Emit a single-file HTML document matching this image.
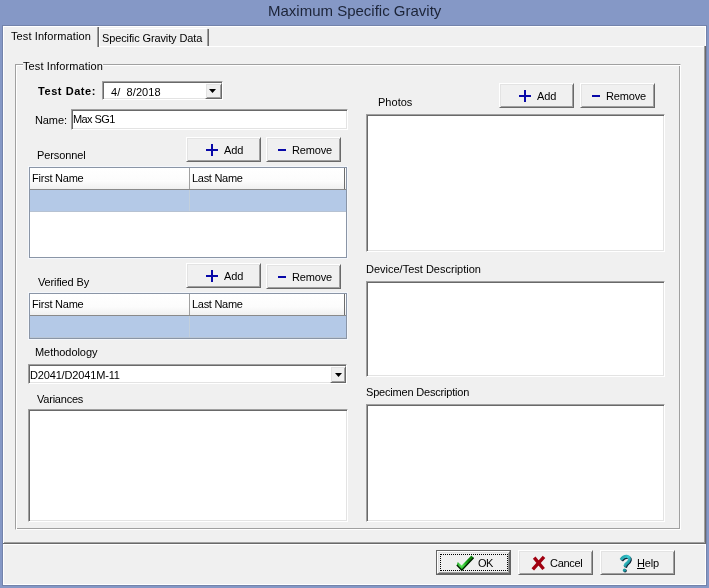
<!DOCTYPE html>
<html><head><meta charset="utf-8">
<style>
*{margin:0;padding:0;box-sizing:border-box}
html,body{width:709px;height:588px;overflow:hidden}
body{background:#8598c6;position:relative;font-family:"Liberation Sans",sans-serif;font-size:11px;color:#000}
.a{position:absolute}
.t{position:absolute;white-space:pre;line-height:13px;letter-spacing:-0.1px;will-change:transform}
.ln{position:absolute}
.sunk{position:absolute;background:#fff;border:1px solid;border-color:#a0a0a0 #fff #fff #a0a0a0;box-shadow:inset 1px 1px 0 #696969,inset -1px -1px 0 #e3e3e3}
.btn{position:absolute;background:#f0f0f0;border:1px solid;border-color:#fff #696969 #696969 #fff;box-shadow:inset 1px 1px 0 #e3e3e3,inset -1px -1px 0 #a0a0a0}
.grid{position:absolute;background:#fff;border:1px solid #8a95a6;box-shadow:0 0 0 1px #f4f7fc}
.hdr{position:absolute;left:0;top:0;height:22px;background:linear-gradient(#ffffff,#fcfcfc 60%,#f0f0f0);border-bottom:1px solid #8a8a8a}
.sel{position:absolute;left:0;background:#b4c9e7}
.grp{position:absolute;border:1px solid;border-color:#a0a0a0 #fff #fff #a0a0a0;box-shadow:inset 1px 1px 0 #fff,inset -1px -1px 0 #a0a0a0}
</style></head><body>
<!-- frame dark lines -->
<div class="a" style="left:2px;top:25px;width:705px;height:561px;background:#7383ab"></div>
<!-- client -->
<div class="a" style="left:3px;top:26px;width:703px;height:559px;background:#f0f0f0"></div>
<!-- title -->
<div class="t" style="left:268px;top:2px;font-size:15px;line-height:17px;color:#1c2438;letter-spacing:0">Maximum Specific Gravity</div>

<!-- tab strip white top/left/right -->
<div class="ln" style="left:3px;top:26px;width:703px;height:1px;background:#fff"></div>
<div class="ln" style="left:3px;top:26px;width:1px;height:518px;background:#fff"></div>
<div class="ln" style="left:705px;top:26px;width:1px;height:20px;background:#fff"></div>
<!-- tab1 right edge -->
<div class="ln" style="left:97px;top:27px;width:1px;height:20px;background:#a0a0a0"></div>
<div class="ln" style="left:98px;top:27px;width:1px;height:20px;background:#696969"></div>
<!-- tab2 -->
<div class="ln" style="left:99px;top:28px;width:108px;height:1px;background:#fff"></div>
<div class="ln" style="left:99px;top:28px;width:1px;height:18px;background:#fff"></div>
<div class="ln" style="left:207px;top:29px;width:1px;height:17px;background:#a0a0a0"></div>
<div class="ln" style="left:208px;top:29px;width:1px;height:17px;background:#696969"></div>
<div class="t" style="left:11px;top:30px;letter-spacing:0.1px">Test Information</div>
<div class="t" style="left:102px;top:32px;letter-spacing:-0.12px">Specific Gravity Data</div>
<!-- page border -->
<div class="ln" style="left:99px;top:46px;width:607px;height:1px;background:#fff"></div>
<div class="ln" style="left:704px;top:46px;width:1px;height:497px;background:#a0a0a0"></div>
<div class="ln" style="left:705px;top:46px;width:1px;height:498px;background:#696969"></div>
<div class="ln" style="left:4px;top:542px;width:701px;height:1px;background:#a0a0a0"></div>
<div class="ln" style="left:3px;top:543px;width:703px;height:1px;background:#696969"></div>
<!-- bottom panel -->
<div class="a" style="left:3px;top:544px;width:703px;height:41px;border:1px solid #fff"></div>

<!-- group box -->
<div class="grp" style="left:15px;top:64px;width:666px;height:466px"></div>
<div class="a" style="left:23px;top:60px;width:80px;height:12px;background:#f0f0f0"></div>
<div class="t" style="left:23px;top:60px;letter-spacing:0.1px">Test Information</div>

<!-- Test Date -->
<div class="t" style="left:38px;top:85px;font-weight:bold;letter-spacing:0.56px">Test Date:</div>
<div class="sunk" style="left:102px;top:81px;width:121px;height:19px"></div>
<div class="t" style="left:111px;top:86px;letter-spacing:0.07px">4/  8/2018</div>
<div class="btn" style="left:205px;top:83px;width:17px;height:16px"></div>
<svg class="a" style="left:209px;top:89px" width="7" height="4"><polygon points="0,0 7,0 3.5,4" fill="#000"/></svg>

<!-- Name -->
<div class="t" style="left:35px;top:114px;letter-spacing:-0.1px">Name:</div>
<div class="sunk" style="left:71px;top:109px;width:277px;height:21px"></div>
<div class="t" style="left:73px;top:113px;letter-spacing:-0.58px">Max SG1</div>

<!-- Personnel -->
<div class="t" style="left:37px;top:149px;letter-spacing:-0.11px">Personnel</div>
<div class="btn" style="left:186px;top:137px;width:75px;height:25px"></div>
<svg class="a" style="left:206px;top:144px" width="12" height="12"><rect x="5" y="0" width="2" height="12" fill="#0808a8"/><rect x="0" y="5" width="12" height="2" fill="#0808a8"/></svg>
<div class="t" style="left:224px;top:144px;letter-spacing:-0.15px">Add</div>
<div class="btn" style="left:266px;top:137px;width:75px;height:25px"></div>
<svg class="a" style="left:278px;top:149px" width="8" height="2"><rect x="0" y="0" width="8" height="2" fill="#0808a8"/></svg>
<div class="t" style="left:292px;top:144px;letter-spacing:-0.16px">Remove</div>

<div class="grid" style="left:29px;top:167px;width:318px;height:91px">
  <div class="hdr" style="width:316px"></div>
  <div class="ln" style="left:159px;top:0;width:1px;height:21px;background:#a0a0a0"></div>
  <div class="ln" style="left:314px;top:0;width:1px;height:21px;background:#6d6d6d"></div>
  <div class="sel" style="top:22px;width:316px;height:21px"></div>
  <div class="ln" style="left:0;top:43px;width:316px;height:1px;background:#b6c2d2"></div>
  <div class="ln" style="left:159px;top:22px;width:1px;height:21px;background:#c2cfdc"></div>
</div>
<div class="t" style="left:32px;top:172px;letter-spacing:-0.23px">First Name</div>
<div class="t" style="left:192px;top:172px;letter-spacing:-0.29px">Last Name</div>

<!-- Verified By -->
<div class="t" style="left:38px;top:276px;letter-spacing:-0.14px">Verified By</div>
<div class="btn" style="left:186px;top:263px;width:75px;height:25px"></div>
<svg class="a" style="left:206px;top:270px" width="12" height="12"><rect x="5" y="0" width="2" height="12" fill="#0808a8"/><rect x="0" y="5" width="12" height="2" fill="#0808a8"/></svg>
<div class="t" style="left:224px;top:270px;letter-spacing:-0.15px">Add</div>
<div class="btn" style="left:266px;top:264px;width:75px;height:25px"></div>
<svg class="a" style="left:278px;top:276px" width="8" height="2"><rect x="0" y="0" width="8" height="2" fill="#0808a8"/></svg>
<div class="t" style="left:292px;top:271px;letter-spacing:-0.16px">Remove</div>

<div class="grid" style="left:29px;top:293px;width:318px;height:46px">
  <div class="hdr" style="width:316px"></div>
  <div class="ln" style="left:159px;top:0;width:1px;height:21px;background:#a0a0a0"></div>
  <div class="ln" style="left:314px;top:0;width:1px;height:21px;background:#6d6d6d"></div>
  <div class="sel" style="top:22px;width:316px;height:21px"></div>
  <div class="ln" style="left:0;top:43px;width:316px;height:1px;background:#b9c6d6"></div>
  <div class="ln" style="left:159px;top:22px;width:1px;height:21px;background:#c2cfdc"></div>
</div>
<div class="t" style="left:32px;top:298px;letter-spacing:-0.23px">First Name</div>
<div class="t" style="left:192px;top:298px;letter-spacing:-0.29px">Last Name</div>

<!-- Methodology -->
<div class="t" style="left:35px;top:346px;letter-spacing:-0.05px">Methodology</div>
<div class="sunk" style="left:28px;top:364px;width:319px;height:20px"></div>
<div class="t" style="left:30px;top:369px;letter-spacing:-0.16px">D2041/D2041M-11</div>
<div class="btn" style="left:330px;top:366px;width:16px;height:17px"></div>
<svg class="a" style="left:335px;top:373px" width="7" height="4"><polygon points="0,0 7,0 3.5,4" fill="#000"/></svg>

<!-- Variances -->
<div class="t" style="left:37px;top:393px;letter-spacing:-0.22px">Variances</div>
<div class="sunk" style="left:28px;top:409px;width:320px;height:113px"></div>

<!-- Right column -->
<div class="t" style="left:378px;top:96px;letter-spacing:0.02px">Photos</div>
<div class="btn" style="left:499px;top:83px;width:75px;height:25px"></div>
<svg class="a" style="left:519px;top:90px" width="12" height="12"><rect x="5" y="0" width="2" height="12" fill="#0808a8"/><rect x="0" y="5" width="12" height="2" fill="#0808a8"/></svg>
<div class="t" style="left:537px;top:90px;letter-spacing:-0.15px">Add</div>
<div class="btn" style="left:580px;top:83px;width:75px;height:25px"></div>
<svg class="a" style="left:592px;top:95px" width="8" height="2"><rect x="0" y="0" width="8" height="2" fill="#0808a8"/></svg>
<div class="t" style="left:606px;top:90px;letter-spacing:-0.16px">Remove</div>
<div class="sunk" style="left:366px;top:114px;width:299px;height:138px"></div>

<div class="t" style="left:366px;top:263px;letter-spacing:0px">Device/Test Description</div>
<div class="sunk" style="left:366px;top:281px;width:299px;height:96px"></div>

<div class="t" style="left:366px;top:386px;letter-spacing:-0.19px">Specimen Description</div>
<div class="sunk" style="left:366px;top:404px;width:299px;height:118px"></div>

<!-- bottom buttons -->
<div class="a" style="left:436px;top:550px;width:75px;height:25px;border:1px solid #646464"></div>
<div class="btn" style="left:437px;top:551px;width:73px;height:23px"></div>
<div class="a" style="left:440px;top:554px;width:68px;height:17px;border:1px dotted #000"></div>

<div class="t" style="left:478px;top:557px;letter-spacing:-0.6px">OK</div>

<div class="btn" style="left:518px;top:550px;width:75px;height:25px"></div>

<div class="t" style="left:550px;top:557px;letter-spacing:-0.3px">Cancel</div>

<div class="btn" style="left:600px;top:550px;width:75px;height:25px"></div>

<div class="t" style="left:637px;top:557px;letter-spacing:-0.2px"><u>H</u>elp</div>
<svg class="a" style="left:0;top:0" width="709" height="588">
<defs><radialGradient id="gc" cx="461.5" cy="565" r="9" gradientUnits="userSpaceOnUse"><stop offset="0" stop-color="#6af06a"/><stop offset="0.5" stop-color="#22b022"/><stop offset="1" stop-color="#0c800c"/></radialGradient>
<linearGradient id="gq" x1="0" y1="0" x2="1" y2="1"><stop offset="0" stop-color="#1a9aa2"/><stop offset="0.45" stop-color="#3cc8d0"/><stop offset="1" stop-color="#0e8088"/></linearGradient></defs>
<polygon points="457.8,562 461.6,565.6 471.4,555.4 473.6,557.8 461.8,570.2 456.8,565" fill="url(#gc)"/>
<polyline points="456.8,565 461.8,570.2 473.6,557.8" fill="none" stroke="#002000" stroke-width="1.3"/>
<path d="M534.2,557.6 L543.6,569 M544,556.8 L532.8,569.4" stroke="#a00010" stroke-width="3.4" stroke-linecap="butt" fill="none"/>
<g transform="translate(-0.3,0.6)"><path d="M621.2,559.2 Q623.6,555.6 627,555.7 Q630,556 629.8,558.8 Q629.4,561.2 626,563.6 L625,566" stroke="#0c1c30" stroke-width="3" fill="none" transform="translate(0.8,0.9)"/>
<circle cx="625.4" cy="570.2" r="1.7" fill="#0c1c30"/>
<path d="M621.2,559.2 Q623.6,555.6 627,555.7 Q630,556 629.8,558.8 Q629.4,561.2 626,563.6 L625,566" stroke="url(#gq)" stroke-width="2.9" fill="none"/>
<circle cx="624.8" cy="569.6" r="1.6" fill="#1a98a0"/></g>
</svg>
</body></html>
